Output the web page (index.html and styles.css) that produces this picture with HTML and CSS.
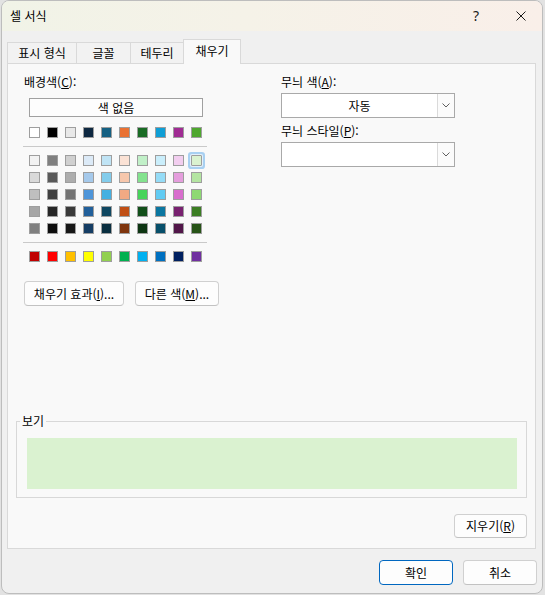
FILE: index.html
```html
<!DOCTYPE html>
<html lang="ko">
<head>
<meta charset="utf-8">
<title>셀 서식</title>
<link rel="stylesheet" href="styles.css">
</head>
<body>
<div class="window">
  <div class="titlebar">
    <span class="title">셀 서식</span>
    <span class="help">?</span>
    <span class="close"><svg width="10" height="10" viewBox="0 0 10 10"><path d="M0.5 0.5 L9.5 9.5 M9.5 0.5 L0.5 9.5" stroke="#1a1a1a" stroke-width="1" fill="none"/></svg></span>
  </div>
  <div class="tabs">
    <div class="tab t1">표시 형식</div>
    <div class="tab t2">글꼴</div>
    <div class="tab t3">테두리</div>
    <div class="tab t4 active">채우기</div>
  </div>
  <div class="panel">
    <div class="top">
      <div class="left">
        <div class="label">배경색(<u>C</u>):</div>
        <div class="nocolor">색 없음</div>
        <div class="swrow row0">
          <span class="sw" style="background:#FFFFFF"></span><span class="sw" style="background:#000000"></span><span class="sw" style="background:#E8E8E8"></span><span class="sw" style="background:#0E2841"></span><span class="sw" style="background:#156082"></span><span class="sw" style="background:#E97132"></span><span class="sw" style="background:#196B24"></span><span class="sw" style="background:#0F9ED5"></span><span class="sw" style="background:#A02B93"></span><span class="sw" style="background:#4EA72E"></span>
        </div>
        <div class="sep"></div>
        <div class="theme">
          <span class="sw" style="background:#F2F2F2"></span><span class="sw" style="background:#7F7F7F"></span><span class="sw" style="background:#D0D0D0"></span><span class="sw" style="background:#DCEAF7"></span><span class="sw" style="background:#C0E4F5"></span><span class="sw" style="background:#FBE2D5"></span><span class="sw" style="background:#C1F0C8"></span><span class="sw" style="background:#CAEEFB"></span><span class="sw" style="background:#F2CEEF"></span><span class="sw sel" style="background:#DAF2D0"></span>
          <span class="sw" style="background:#D9D9D9"></span><span class="sw" style="background:#595959"></span><span class="sw" style="background:#ADADAD"></span><span class="sw" style="background:#A5C9EB"></span><span class="sw" style="background:#83CCEB"></span><span class="sw" style="background:#F7C7AC"></span><span class="sw" style="background:#83E28E"></span><span class="sw" style="background:#95DCF7"></span><span class="sw" style="background:#E59EDD"></span><span class="sw" style="background:#B4E5A2"></span>
          <span class="sw" style="background:#BFBFBF"></span><span class="sw" style="background:#404040"></span><span class="sw" style="background:#747474"></span><span class="sw" style="background:#4E95D9"></span><span class="sw" style="background:#45B0E1"></span><span class="sw" style="background:#F1A983"></span><span class="sw" style="background:#47D45A"></span><span class="sw" style="background:#61CBF3"></span><span class="sw" style="background:#D86DCD"></span><span class="sw" style="background:#8ED973"></span>
          <span class="sw" style="background:#A6A6A6"></span><span class="sw" style="background:#262626"></span><span class="sw" style="background:#3A3A3A"></span><span class="sw" style="background:#215F9A"></span><span class="sw" style="background:#0F4761"></span><span class="sw" style="background:#C04F15"></span><span class="sw" style="background:#124F1A"></span><span class="sw" style="background:#0B76A0"></span><span class="sw" style="background:#782170"></span><span class="sw" style="background:#3B7D23"></span>
          <span class="sw" style="background:#808080"></span><span class="sw" style="background:#0D0D0D"></span><span class="sw" style="background:#171717"></span><span class="sw" style="background:#153D64"></span><span class="sw" style="background:#0A2F40"></span><span class="sw" style="background:#7F350E"></span><span class="sw" style="background:#0D3512"></span><span class="sw" style="background:#074F6A"></span><span class="sw" style="background:#511649"></span><span class="sw" style="background:#275317"></span>
        </div>
        <div class="sep"></div>
        <div class="swrow std">
          <span class="sw" style="background:#C00000"></span><span class="sw" style="background:#FF0000"></span><span class="sw" style="background:#FFC000"></span><span class="sw" style="background:#FFFF00"></span><span class="sw" style="background:#92D050"></span><span class="sw" style="background:#00B050"></span><span class="sw" style="background:#00B0F0"></span><span class="sw" style="background:#0070C0"></span><span class="sw" style="background:#002060"></span><span class="sw" style="background:#7030A0"></span>
        </div>
        <div class="btns">
          <button class="btn b-fill">채우기 효과(<u>I</u>)...</button>
          <button class="btn b-more">다른 색(<u>M</u>)...</button>
        </div>
      </div>
      <div class="right">
        <div class="label">무늬 색(<u>A</u>):</div>
        <div class="combo">
          <span class="val">자동</span>
          <span class="arrow"><svg width="8" height="5" viewBox="0 0 8 5"><path d="M0.5 0.5 L4 4 L7.5 0.5" stroke="#606060" stroke-width="1" fill="none"/></svg></span>
        </div>
        <div class="label label2">무늬 스타일(<u>P</u>):</div>
        <div class="combo">
          <span class="val"></span>
          <span class="arrow"><svg width="8" height="5" viewBox="0 0 8 5"><path d="M0.5 0.5 L4 4 L7.5 0.5" stroke="#606060" stroke-width="1" fill="none"/></svg></span>
        </div>
      </div>
    </div>
    <fieldset class="preview">
      <legend>보기</legend>
      <div class="fill"></div>
    </fieldset>
    <div class="clear-row">
      <button class="btn b-clear">지우기(<u>R</u>)</button>
    </div>
  </div>
  <div class="footer">
    <button class="btn b-foot primary">확인</button>
    <button class="btn b-foot">취소</button>
  </div>
</div>
</body>
</html>
```
FILE: styles.css
```css
body {
  margin: 0;
  background: #e2e2e2;
  font-family: "Noto Sans CJK KR", "Noto Sans", sans-serif;
  font-size: 12px;
  color: #000;
}

u {
  text-decoration: underline;
  text-underline-offset: 1px;
}

.window {
  box-sizing: border-box;
  width: 542px;
  height: 594px;
  margin-left: 1px;
  border: 1px solid #bdbdbd;
  border-radius: 8px;
  background: #f0f0f0;
  overflow: hidden;
  display: flex;
  flex-direction: column;
}

.titlebar {
  height: 30px;
  flex: none;
  display: flex;
  align-items: center;
  background: linear-gradient(90deg, #f1f3e7 0%, #f5f2e8 45%, #f9efe9 100%);
}

.title {
  flex: 1;
  padding-left: 8px;
  line-height: 16px;
}

.help {
  width: 46px;
  text-align: center;
  font-family: "Noto Sans", sans-serif;
  font-size: 14px;
  line-height: 16px;
  color: #1a1a1a;
}

.close {
  width: 43px;
  display: flex;
  align-items: center;
  justify-content: center;
}

.tabs {
  height: 32px;
  flex: none;
  display: flex;
  align-items: flex-end;
  padding-left: 5px;
}

.tab {
  box-sizing: border-box;
  height: 21px;
  border: 1px solid #d9d9d9;
  border-bottom: none;
  background: #f2f2f2;
  text-align: center;
  line-height: 20px;
  white-space: nowrap;
}

.tab + .tab {
  margin-left: -1px;
}

.t1 { width: 70px; }
.t2 { width: 55px; }
.t3 { width: 54px; }
.t4 { width: 58px; }

.tab.active {
  height: 25px;
  margin-bottom: -1px;
  background: #f9f9f9;
  line-height: 22px;
  position: relative;
  z-index: 1;
}

.panel {
  box-sizing: border-box;
  flex: none;
  margin-left: 5px;
  width: 529px;
  height: 486px;
  border: 1px solid #d9d9d9;
  background: #f9f9f9;
  display: flex;
  flex-direction: column;
  padding: 10px 8px 10px 16px;
}

.top {
  display: flex;
}

.left {
  width: 185px;
  flex: none;
}

.right {
  width: 174px;
  margin-left: 72px;
  flex: none;
}

.label {
  line-height: 16px;
  white-space: nowrap;
}

.nocolor {
  box-sizing: border-box;
  margin: 8px 0 0 5px;
  width: 174px;
  height: 19px;
  border: 1px solid #a0a0a0;
  background: #fdfdfd;
  text-align: center;
  line-height: 17px;
}

.swrow {
  display: flex;
  gap: 7px;
  margin-left: 5px;
}

.row0 {
  margin-top: 10px;
}

.sw {
  box-sizing: border-box;
  width: 11px;
  height: 11px;
  border: 1px solid #9e9e9e;
  flex: none;
  display: block;
}

.sw.sel {
  box-shadow: 0 0 0 1px #e3f0fb, 0 0 0 3px #a8d0f1;
  border-radius: 1px;
}

.sep {
  height: 1px;
  width: 184px;
  margin: 8px 0 0 -1px;
  background: #c9c9c9;
}

.theme {
  margin: 8px 0 0 5px;
  display: grid;
  grid-template-columns: repeat(10, 11px);
  column-gap: 7px;
  row-gap: 6px;
}

.std {
  margin-top: 8px;
}

.btns {
  margin-top: 19px;
  display: flex;
  gap: 11px;
}

.btn {
  box-sizing: border-box;
  flex: none;
  height: 25px;
  padding: 0;
  border: 1px solid #d0d0d0;
  border-bottom-color: #c2c2c2;
  border-radius: 4px;
  background: #fdfdfd;
  font-family: inherit;
  font-size: 12px;
  color: #000;
  line-height: 22px;
  white-space: nowrap;
}

.b-fill { width: 100px; }
.b-more { width: 84px; }

.combo {
  box-sizing: border-box;
  margin-top: 3px;
  height: 25px;
  border: 1px solid #a9a9a9;
  background: #fff;
  display: flex;
}

.label2 {
  margin-top: 5px;
}

.val {
  flex: 1;
  text-align: center;
  line-height: 23px;
}

.arrow {
  box-sizing: border-box;
  width: 17px;
  border-left: 1px solid #dadada;
  background: #fbfbfb;
  display: flex;
  align-items: center;
  justify-content: center;
}

.preview {
  margin: auto 0 0 -8px;
  padding: 10px 9px 8px 0;
  border: 1px solid #d8d8d8;
  min-width: 0;
}

.preview legend {
  margin-left: 3px;
  padding: 0 2px;
  line-height: 14px;
}

.fill {
  margin-left: 10px;
  height: 51px;
  background: #DAF2D0;
}

.clear-row {
  margin-top: 16px;
  display: flex;
  justify-content: flex-end;
}

.b-clear {
  width: 73px;
  height: 24px;
}

.footer {
  display: flex;
  justify-content: flex-end;
  gap: 10px;
  padding: 11px 5px 0 0;
}

.b-foot {
  width: 74px;
}

.primary {
  border-color: #0067c0;
}
```
